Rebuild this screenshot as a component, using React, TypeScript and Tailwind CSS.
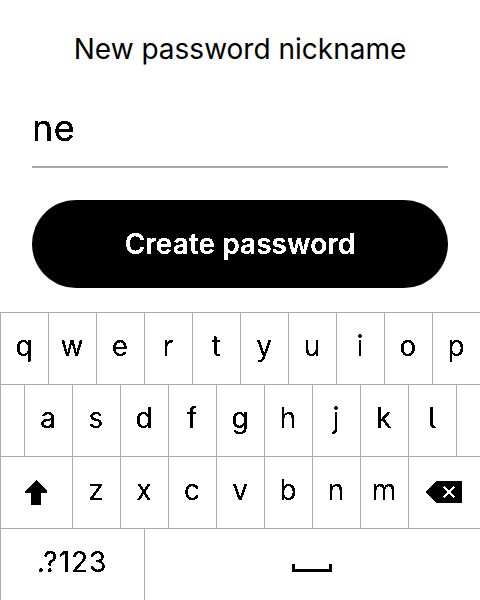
import React from "react";

function Key({ children, width = "w-12" }: { children?: React.ReactNode; width?: string }) {
  return (
    <div className={`flex h-full shrink-0 items-center justify-center border-l border-[#aaa] pb-[3px] pr-px ${width}`}>
      {children}
    </div>
  );
}

function Keys({ letters }: { letters: string }) {
  return (
    <>
      {letters.split("").map((c) => (
        <Key key={c}>
          <span className="mb-[2px] [filter:url(#crisp)]">{c}</span>
        </Key>
      ))}
    </>
  );
}

function Row({ children }: { children: React.ReactNode }) {
  return <div className="flex h-[72px] border-t border-[#aaa]">{children}</div>;
}

export default function App() {
  return (
    <div className="flex h-[600px] w-[480px] flex-col overflow-hidden bg-white font-['Inter',sans-serif] text-black">
      {/* Hard-edged glyphs, as on a one-bit e-paper panel */}
      <svg width="0" height="0" className="absolute">
        <filter id="crisp" x="-20%" y="-20%" width="140%" height="140%" colorInterpolationFilters="sRGB">
          <feComponentTransfer>
            <feFuncA type="discrete" tableValues="0 0 1 1 1" />
          </feComponentTransfer>
        </filter>
        <filter id="crisp-wide" x="-20%" y="-20%" width="140%" height="140%" colorInterpolationFilters="sRGB">
          <feComponentTransfer>
            <feFuncA type="discrete" tableValues="0 1 1 1" />
          </feComponentTransfer>
        </filter>
      </svg>
      <div className="flex h-[312px] flex-col px-8">
        <h1 className="mt-8 text-center text-[28px] leading-[34px]">New password nickname</h1>
        <div className="mt-6 flex h-[78px] items-center border-b-2 border-[#aaa] text-[36px]">
          <span className="tracking-[0.5px] [filter:url(#crisp-wide)]">ne</span>
        </div>
        <button className="mt-8 h-[88px] shrink-0 rounded-full bg-black text-[28px] font-semibold tracking-[0.05px] text-white">
          <span className="inline-block [filter:url(#crisp)]">Create password</span>
        </button>
      </div>
      <div className="text-[28px] [font-feature-settings:'cv05']">
        <Row>
          <Keys letters="qwertyuiop" />
        </Row>
        <Row>
          <Key width="w-6" />
          <Keys letters="asdfghjkl" />
          <Key width="w-6" />
        </Row>
        <Row>
          <Key width="w-[72px]">
            <svg className="mt-[3px]" width="22" height="25" viewBox="0 0 22 25" shapeRendering="crispEdges">
              <path d="M11 0L22 11V13H16V25H6V13H0V11Z" />
            </svg>
          </Key>
          <Keys letters="zxcvbnm" />
          <Key width="w-[72px]">
            <svg className="mt-[2px]" width="36" height="22" viewBox="0 0 36 22" shapeRendering="crispEdges">
              <path d="M0 10.5L10 0H35L36 1V21L35 22H10L0 11.5Z" />
              <path d="M17.7 5.7L28.3 16.3M28.3 5.7L17.7 16.3" stroke="white" strokeWidth="2" />
            </svg>
          </Key>
        </Row>
        <Row>
          <Key width="w-36">
            <span className="mb-[2px] tracking-[1px] [filter:url(#crisp)]">.?123</span>
          </Key>
          <Key width="w-[336px]">
            <svg className="mt-[10px]" width="40" height="8" viewBox="0 0 40 8" shapeRendering="crispEdges">
              <path d="M0 0H3V5H37V0H40V8H0Z" />
            </svg>
          </Key>
        </Row>
      </div>
    </div>
  );
}
